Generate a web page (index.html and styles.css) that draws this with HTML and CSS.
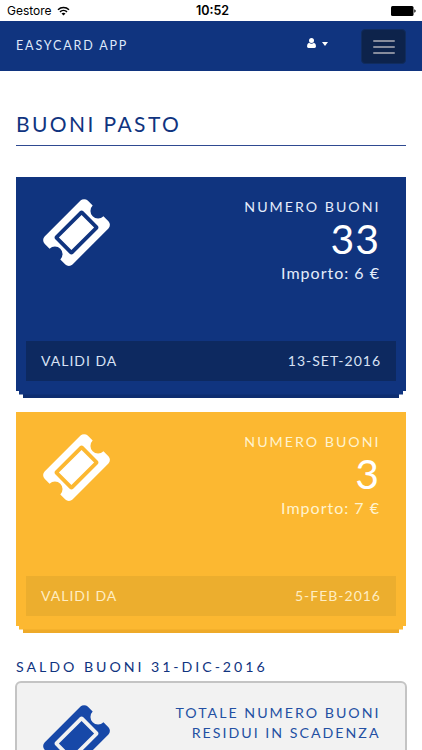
FILE: index.html
```
<!DOCTYPE html>
<html lang="it">
<head>
	<meta charset="utf-8">
	<meta name="viewport" content="width=device-width, initial-scale=1">
	<title>EasyCard App</title>
	<link rel="stylesheet" href="styles.css">
</head>
<body>

<svg width="0" height="0" class="defs">
	<symbol id="ticket" viewBox="0 0 1792 1792">
		<path d="M1024 452l316 316-572 572-316-316zm-211 979l618-618q19-19 19-45t-19-45l-362-362q-18-18-45-18t-45 18l-618 618q-19 19-19 45t19 45l362 362q18 18 45 18t45-18zm889-637l-907 908q-37 37-90.500 37t-90.500-37l-126-126q56-56 56-136t-56-136-136-56-136 56l-125-126q-37-37-37-90.500t37-90.500l907-906q37-37 90.500-37t90.500 37l125 125q-56 56-56 136t56 136 136 56 136-56l126 125q37 37 37 90.500t-37 90.500z"/>
	</symbol>
</svg>

<div class="statusbar">
	<div class="carrier">
		<span>Gestore</span>
		<svg class="wifi" viewBox="0 0 13 10" width="13" height="10">
			<path d="M1 3.700a7.800 7.800 0 0 1 11 0M3 5.900a5 5 0 0 1 7 0" fill="none" stroke="#000" stroke-width="1.500"/>
			<path d="M6.500 9.600L4.500 7.600a2.900 2.900 0 0 1 4 0z"/>
		</svg>
	</div>
	<b>10:52</b>
	<div class="power">
		<svg viewBox="0 0 25 10" width="25" height="10">
			<rect width="22.500" height="10" rx="1.500"/>
			<path d="M23.300 3.300q1.400.4 1.400 1.700t-1.400 1.700z"/>
		</svg>
	</div>
</div>

<div class="navbar">
	<a class="brand">EASYCARD APP</a>
	<a class="user">
		<svg viewBox="0 0 9 10" width="9" height="10">
			<circle cx="4.500" cy="2.600" r="2.500"/>
			<path d="M2 4.700q2.500 2 5 0Q9 5.300 9 8.300 9 10 7.500 10h-6Q0 10 0 8.300 0 5.300 2 4.700z"/>
		</svg>
		<i class="caret"></i>
	</a>
	<button class="toggle">
		<i></i>
		<i></i>
		<i></i>
	</button>
</div>

<div class="content">
	<h1>BUONI PASTO</h1>

	<div class="card blue">
		<div class="top">
			<svg class="ticket"><use href="#ticket"/></svg>
			<div class="info">
				<div class="label">NUMERO BUONI</div>
				<div class="number">33</div>
				<div class="importo">Importo: 6 €</div>
			</div>
		</div>
		<div class="valid">
			<span>VALIDI DA</span>
			<span class="date">13-SET-2016</span>
		</div>
	</div>

	<div class="card yellow">
		<div class="top">
			<svg class="ticket"><use href="#ticket"/></svg>
			<div class="info">
				<div class="label">NUMERO BUONI</div>
				<div class="number">3</div>
				<div class="importo">Importo: 7 €</div>
			</div>
		</div>
		<div class="valid">
			<span>VALIDI DA</span>
			<span class="date">5-FEB-2016</span>
		</div>
	</div>

	<h2>SALDO BUONI 31-DIC-2016</h2>

	<div class="saldo">
		<svg class="ticket"><use href="#ticket"/></svg>
		<div class="label">TOTALE NUMERO BUONI<br>RESIDUI IN SCADENZA</div>
	</div>
</div>

</body>
</html>
```
FILE: styles.css
```
*{
	box-sizing: border-box;
}
body{
	margin: 0;
	height: 750px;
	overflow: hidden;
	background: #fff;
	font-family: Lato, sans-serif;
	color: #10347f;
}
.defs{
	position: absolute;
}
.statusbar{
	display: flex;
	align-items: center;
	height: 21px;
	padding: 1px 6px 0 7px;
	font: 12px/20px Inter, sans-serif;
	color: #000;
}
.statusbar b{
	margin-left: 2px;
	font-size: 12.500px;
	font-weight: 600;
}
.carrier,.power{
	display: flex;
	align-items: center;
	flex: 1;
}
.wifi{
	margin-left: 5px;
}
.power{
	justify-content: flex-end;
}
.navbar{
	display: flex;
	height: 50px;
	background: #10347f;
	color: #fff;
}
.brand{
	width: 291px;
	padding-left: 16px;
	font-size: 12.500px;
	line-height: 50px;
	letter-spacing: 1.850px;
	color: #dfe9fa;
}
.user{
	display: flex;
	width: 70px;
	padding: 17px 0 0 16px;
}
.user svg{
	fill: #fff;
}
.caret{
	width: 0;
	height: 0;
	margin: 4px 0 0 6px;
	border: 3.500px solid transparent;
	border-top: 4px solid #fff;
	border-bottom: 0;
}
.toggle{
	display: flex;
	flex-direction: column;
	align-items: center;
	justify-content: center;
	gap: 4px;
	width: 45px;
	height: 35px;
	margin-top: 8px;
	padding: 0;
	border: 1px solid #102c5e;
	border-radius: 4px;
	background: #0d234b;
}
.toggle i{
	width: 22px;
	height: 2px;
	border-radius: 1px;
	background: #868c9c;
}
.content{
	padding: 0 16px;
}
h1{
	height: 75px;
	margin: 0 0 31px;
	padding-top: 35px;
	border-bottom: 1px solid #2f4a91;
	font-size: 21px;
	font-weight: 400;
	line-height: 36px;
	letter-spacing: 2.400px;
}
.card{
	height: 214px;
	margin-bottom: 21px;
	padding: 20px 10px 0;
	color: #fff;
}
.blue{
	background: #10347f;
	box-shadow: 0 6.500px 0 -3px #10347f, 0 14px 0 -7px #0d2d70;
}
.yellow{
	background: #fcb831;
	box-shadow: 0 6.500px 0 -3px #fcb831, 0 14px 0 -7px #eeaa29;
}
.top{
	display: flex;
	justify-content: space-between;
	height: 144px;
	padding: 0 16px 0 15px;
}
.ticket{
	width: 71px;
	height: 71px;
	fill: #fff;
}
.info{
	text-align: right;
}
.label{
	font-size: 14.200px;
	line-height: 20px;
	letter-spacing: 2px;
	margin-right: -.5px;
}
.blue .label,.blue .importo{
	color: #e4ecfb;
}
.yellow .label,.yellow .importo{
	color: #fff3cf;
}
.number{
	font-size: 41px;
	line-height: 43px;
	letter-spacing: 1px;
}
.importo{
	font-size: 16px;
	line-height: 25px;
	letter-spacing: 1px;
}
.valid{
	display: flex;
	justify-content: space-between;
	height: 40px;
	padding: 0 15px;
	font-size: 14px;
	line-height: 39px;
	letter-spacing: 1px;
}
.blue .valid{
	background: #0d2960;
	color: #d8e2f5;
}
.yellow .valid{
	background: #ecae2e;
	color: #ffedc2;
}
h2{
	margin: 0;
	padding-top: 10px;
	font-size: 14.200px;
	font-weight: 400;
	line-height: 20px;
	letter-spacing: 2.950px;
}
.saldo{
	display: flex;
	justify-content: space-between;
	height: 214px;
	margin: 4px -1px 0;
	padding: 20px 25px 20px 24px;
	border: 2px solid #c4c4c4;
	border-radius: 6px;
	background: #f2f2f2;
	color: #2450a3;
	text-align: right;
}
.saldo .ticket{
	fill: #1748a8;
}
```
